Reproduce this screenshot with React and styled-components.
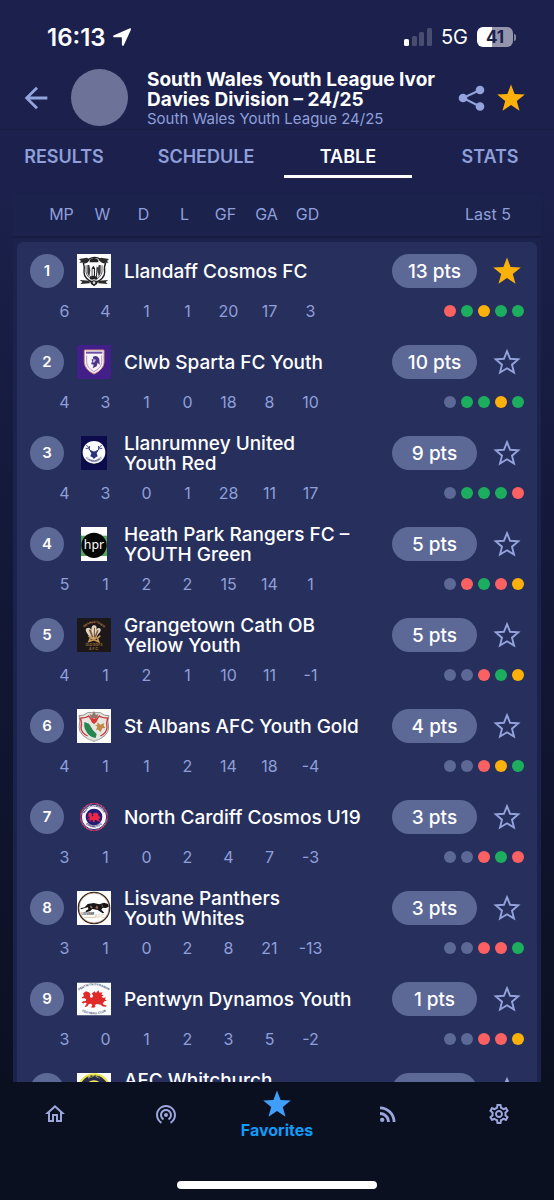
import React, { useState } from "react";
import styled, { createGlobalStyle } from "styled-components";
import {
  MdOutlineHome,
  MdWifiTethering,
  MdRssFeed,
  MdOutlineSettings,
  MdArrowBack
} from "react-icons/md";

const colors = {
  header: "#1b214c",
  card: "#27305c",
  pill: "#5c6896",
  muted: "#8f9fda",
  grey: "#5c6896",
  green: "#1cae5e",
  red: "#fb6163",
  amber: "#fbb00a",
  nav: "#0b1021",
  blue: "#129bf9"
};

const GlobalStyle = createGlobalStyle`
  * {
    box-sizing: border-box;
  }

  body {
    margin: 0;
    background: ${colors.nav};
    color: #ffffff;
    font-family: Inter, "Liberation Sans", sans-serif;
  }

  button {
    padding: 0;
    border: 0;
    background: none;
    color: inherit;
    font: inherit;
    cursor: pointer;
  }
`;

const Screen = styled.div`
  display: flex;
  flex-direction: column;
  height: 100vh;
  background: linear-gradient(#1b214c 180px, #15193c 480px, ${colors.nav} 1080px);
`;

const StatusBar = styled.div`
  display: flex;
  align-items: center;
  justify-content: space-between;
  height: 68px;
  padding: 6px 38px 0 47px;
  background: ${colors.header};
`;

const StatusGroup = styled.div`
  display: flex;
  align-items: center;
  gap: ${props => props.$gap}px;
`;

const Time = styled.span`
  font-size: 24px;
  font-weight: 600;
`;

const Network = styled.span`
  font-size: 20px;
`;

const Battery = styled.span`
  display: flex;
  align-items: center;
  gap: 1px;

  &::after {
    content: "";
    width: 2px;
    height: 7px;
    border-radius: 0 2px 2px 0;
    background: #84869f;
  }
`;

const BatteryLevel = styled.span`
  width: 36px;
  border-radius: 6px;
  background: linear-gradient(90deg, #ffffff 41%, #9495ac 41%);
  color: ${colors.header};
  font-size: 17px;
  font-weight: 700;
  line-height: 20px;
  text-align: center;
`;

const Header = styled.header`
  display: flex;
  align-items: center;
  height: 62px;
  padding: 0 26px 2px 19px;
  border-bottom: 1px solid #161b3f;
  background: ${colors.header};
`;

const IconButton = styled.button`
  display: flex;
  flex: none;
  color: ${props => props.$color || "#94a3dc"};
`;

const LeagueLogo = styled.div`
  flex: none;
  width: 57px;
  height: 57px;
  margin: 0 19px 0 18px;
  border-radius: 50%;
  background: #6d7398;
`;

const Titles = styled.div`
  flex: 1;
  min-width: 0;
  padding-top: 2px;
`;

const Title = styled.h1`
  margin: 0;
  font-size: 19px;
  font-weight: 700;
  line-height: 20px;
  white-space: pre;
`;

const Subtitle = styled.p`
  margin: 0;
  color: ${colors.muted};
  font-size: 15px;
  line-height: 18px;
`;

const HeaderActions = styled.div`
  display: flex;
  align-items: center;
  gap: 9px;
`;

const Tabs = styled.nav`
  display: flex;
  flex: none;
  gap: 14px;
  background: ${colors.header};
`;

const Tab = styled.button`
  flex: 1;
  height: 48px;
  padding-top: 8px;
  border-bottom: 3px solid ${props => (props.$active ? "#ffffff" : "transparent")};
  color: ${props => (props.$active ? "#ffffff" : colors.muted)};
  font-size: 18px;
  font-weight: 600;
`;

const Scroll = styled.main`
  flex: 1;
  min-height: 0;
  overflow-y: auto;
  padding: 16px 13px 0;
  scrollbar-width: none;
`;

const Table = styled.table`
  display: block;
  background: #1b224c;
`;

const Head = styled.thead`
  display: block;
  margin-bottom: 4px;
  border-bottom: 2px solid #161b3f;
`;

const HeadRow = styled.tr`
  display: flex;
  align-items: center;
  height: 42px;
  padding: 0 30px 2px 28px;
`;

const HeadCell = styled.th`
  flex: ${props => (props.$last ? "1" : "0 0 41px")};
  padding: 0;
  color: ${colors.muted};
  font-size: 16px;
  font-weight: 400;
  text-align: ${props => (props.$last ? "right" : "center")};
`;

const TeamGroup = styled.tbody`
  display: block;
  margin: 0 4px;
  padding-bottom: 11px;
  background: ${colors.card};

  &:first-of-type {
    border-radius: 6px 6px 0 0;
  }
`;

const TeamRow = styled.tr`
  display: flex;
  align-items: center;
  gap: 13px;
  height: 58px;
  padding: 0 13px;
`;

const Cell = styled.td`
  display: flex;
  padding: 0;
`;

const Rank = styled.span`
  width: 34px;
  border-radius: 50%;
  background: ${colors.pill};
  font-size: 15px;
  font-weight: 600;
  line-height: 34px;
  text-align: center;
`;

const TeamName = styled.th`
  flex: 1;
  min-width: 0;
  padding: 2px 0 0;
  font-size: 19px;
  font-weight: 500;
  line-height: 20px;
  text-align: left;
  white-space: pre;
`;

const Points = styled.span`
  width: 85px;
  height: 34px;
  border-radius: 17px;
  background: ${colors.pill};
  font-size: 19px;
  font-weight: 500;
  line-height: 35px;
  text-align: center;
`;

const StatsRow = styled.tr`
  display: flex;
  align-items: center;
  height: 22px;
  padding: 0 13px 0 27px;
`;

const Stat = styled.td`
  flex: 0 0 41px;
  padding: 0;
  color: ${colors.muted};
  font-size: 16px;
  text-align: center;
`;

const Form = styled.td`
  display: flex;
  flex: 1;
  justify-content: flex-end;
  gap: 5px;
  padding: 0;
`;

const Dot = styled.span`
  width: 12px;
  height: 12px;
  border-radius: 50%;
  background: ${props => props.$color};
`;

const BottomNav = styled.nav`
  flex: none;
  height: 118px;
  background: ${colors.nav};
`;

const NavItems = styled.div`
  display: flex;
  height: 99px;
`;

const NavLink = styled.a`
  display: flex;
  flex: 1;
  flex-direction: column;
  align-items: center;
  padding-top: ${props => (props.$active ? 5 : 20)}px;
  color: ${props => (props.$active ? colors.blue : "#9ba6dc")};
  font-size: 16px;
  font-weight: 700;
  line-height: 18px;
  text-decoration: none;
`;

const HomeIndicator = styled.div`
  width: 36%;
  height: 8px;
  margin: 0 auto;
  border-radius: 4px;
  background: #ffffff;
`;

const Star = ({ color = "currentColor" }) => (
  <svg width="34" height="34" viewBox="0 0 34 34" aria-hidden="true">
    <path fill={color} d="M17 3.5l3.6 9.600 10.200.4-8 6.400 2.700 9.800-8.500-5.700-8.500 5.700 2.700-9.800-8-6.400 10.200-.4z" />
  </svg>
);

const StarOutline = () => (
  <svg width="34" height="34" viewBox="0 0 34 34" aria-hidden="true">
    <path
      fill="none"
      stroke="currentColor"
      strokeWidth="1.900"
      d="M17 6.200L20.100 13.800L28.200 14.400L22 19.700L24 27.500L17 23.300L10 27.500L12 19.700L5.800 14.400L13.900 13.800z"
    />
  </svg>
);

const ShareIcon = () => (
  <svg width="28" height="28" viewBox="0 0 28 28" aria-hidden="true">
    <path fill="none" stroke="currentColor" strokeWidth="2" d="M23 6L6 14l17 8.500" />
    <circle cx="6" cy="14" r="4.300" fill="currentColor" />
    <circle cx="23" cy="6" r="4.300" fill="currentColor" />
    <circle cx="23" cy="22.500" r="4.300" fill="currentColor" />
  </svg>
);

const Crest = ({ children }) => (
  <svg width="34" height="34" viewBox="0 0 102 102" aria-hidden="true">
    {children}
  </svg>
);

const ArcText = ({ id, d, fill, size, children }) => (
  <>
    <path id={id} d={d} fill="none" />
    <text fill={fill} fontSize={size} fontWeight="700" textAnchor="middle">
      <textPath href={`#${id}`} startOffset="50%">
        {children}
      </textPath>
    </text>
  </>
);

const Dragon = ({ fill }) => (
  <path
    fill={fill}
    d="M16 32l9-7 10 3 5 7-2 9 7 3 4-8-5-6 9-8 5 6 8-9 4 8 10-2-4 8 8 2-8 6 8 3 6-3-2 8 6 4-8 2-6 8 8 5 6 1-3 4-10-1-9-6-12-2-6 4 3 6-8 2-8-1 5-5-3-7-8 1-6 8-8 2 3-6 4-6-6-3-6 3-5-2 5-5 8-1 2-6-7-4-8 2 2-5 6-3-2-4z"
  />
);

const crests = {
  llandaff: (
    <Crest>
      <path fill="#fdfdfd" d="M0 0h102v102H0z" />
      <path fill="none" stroke="#1c1c1e" strokeWidth="4" d="M19 27q14-1 17-12 17-9 34 0 3 11 16 12-6 12-3 28 0 20-31 33-31-13-31-33 3-16-2-28z" />
      <path fill="#2a2a2c" d="M6 15l24-4 8 6-9 8-22 1 5-5zM96 15l-24-4-8 6 9 8 22 1-5-5zM8 78l30 2v8L10 90l6-6zM94 78l-30 2v8l28 2-6-6z" />
      <path fill="none" stroke="#626268" strokeWidth="3" d="M27 34v20q1 14 24 26 23-12 24-26V34" />
      <path fill="#3c3c40" d="M31 33h6l3 16-3 20-6-12zM71 33h-6l-3 16 3 20 6-12z" />
      <path fill="#222225" d="M38 17l13-6 13 6v8H38zM44 43l5-8 5 8v24h7v9H39v-9h5zM59 37l4 4-3 25h-3z" />
      <path fill="#e6e6e6" d="M46 45h5v20h-5z" />
      <path fill="#222225" d="M38 80h26l-4 10-9 7-9-7z" />
      <circle cx="51" cy="86" r="4" fill="#d5d5d5" />
    </Crest>
  ),
  sparta: (
    <Crest>
      <path fill="#431f8a" d="M0 0h102v102H0z" />
      <path fill="#f8f3f6" stroke="#d38b80" strokeWidth="3" d="M22 15h59v38q-2 21-30 34-27-13-29-34z" />
      <path fill="#6b4fa6" d="M27 20h49v6H27z" />
      <path fill="none" stroke="#8a70be" strokeWidth="2" d="M29 31v21q1 16 22 28 22-12 23-28V31" />
      <path fill="#4a348f" d="M47 36q14-8 20 6l1 18-6-7-3 11-12 6 3-11-8-2 4-8-3-5 6-3z" />
      <path fill="#c4b8df" d="M49 42l8 2-4 8-6 1z" />
    </Crest>
  ),
  llanrumney: (
    <Crest>
      <path fill="#0c0b4b" d="M12 0h78v102H12z" />
      <circle cx="51" cy="49" r="34" fill="#fbfcff" />
      <path fill="none" stroke="#3e488c" strokeWidth="3" d="M48 47q-12-2-14-14l-6-6M34 37l-8 0M36 41l2-11M54 47q12-2 14-14l6-6M68 37l8 0M66 41l-2-11" />
      <path fill="#29327b" d="M37 43l11 4 3-2 3 2 11-4-6 9 3 9-6 3-5 5-5-5-6-3 3-9z" />
      <ArcText id="llanrumney-arc" d="M23 62Q51 94 79 62" fill="#29327b" size="8">LLANRUMNEY</ArcText>
    </Crest>
  ),
  heath: (
    <Crest>
      <path fill="#ffffff" d="M12 0h78v102H12z" />
      <path fill="#57a65d" d="M12 26h78v61H12z" />
      <circle cx="51" cy="55" r="38" fill="#050606" />
      <text x="51" y="66" fill="#ffffff" fontFamily="Noto Sans, sans-serif" fontSize="37" textAnchor="middle">
        hpr
      </text>
    </Crest>
  ),
  grangetown: (
    <Crest>
      <path fill="#1c1718" d="M0 0h102v102H0z" />
      <ArcText id="grangetown-arc" d="M14 38Q51-8 88 38" fill="#ad7944" size="9">GRANGETOWN</ArcText>
      <path fill="#e4d5c1" d="M31 47q-11-17 3-18 6 0 9 7 0-16 10-14 8 2 5 14 4-9 11-5 7 6-6 18l-8 15H44z" />
      <path fill="#7e5c43" d="M35 35l10 24 4-2-7-22zM51 29h3v29h-4zM65 37l-9 24-4-3 8-21z" />
      <path fill="none" stroke="#c39454" strokeWidth="5" d="M34 54l10 6h18l8-7M40 60l-4 10 15-5 14 6-4-12" />
      <text x="51" y="84" fill="#9b6c35" fontSize="10" fontWeight="700" textAnchor="middle">OLD BOYS</text>
      <text x="51" y="96" fill="#9b6c35" fontSize="10" fontWeight="700" textAnchor="middle">A.F.C.</text>
    </Crest>
  ),
  albans: (
    <Crest>
      <path fill="#fbfbf9" d="M0 0h102v102H0z" />
      <path fill="#e6e5e0" stroke="#96928d" strokeWidth="3" d="M6 20q16 1 26-9h38q10 10 26 9-6 16-1 34 0 29-44 43Q7 83 6 54q5-18 0-34z" />
      <path fill="none" stroke="#c83940" strokeWidth="4" d="M10 27q17 0 25-6l16 21 16-21q8 6 25 6-5 16-2 29-1 16-20 25M10 27q6 16 2 29 1 16 20 25" />
      <path fill="#94766b" d="M38 15l7 3 6-12 6 12 7-3-3 12H41z" />
      <path fill="#d93834" d="M51 45q-13-10-9-16 5-5 9 1 6-6 10 0 3 6-10 15z" />
      <path fill="#27864f" d="M22 39q-2 18 5 27 9 18 29 21l3-12-11-11-12-20z" />
      <path fill="#be8b47" d="M61 40l9 7 12-5-2 8 5 7-9 1-5 11-8-7-6 2 4-11-7-4 7-1z" />
      <path fill="#c6c3bd" d="M32 88q19 10 38 0l-4 5q-15 6-30 0z" />
    </Crest>
  ),
  cardiff: (
    <Crest>
      <circle cx="51" cy="51" r="41" fill="#faf7fb" stroke="#c51849" strokeWidth="3" />
      <circle cx="51" cy="51" r="38" fill="none" stroke="#31236f" strokeWidth="3" />
      <circle cx="51" cy="51" r="25" fill="#211d77" />
      <ArcText id="cardiff-top" d="M22 49A29 29 0 0 1 80 49" fill="#26215c" size="9">NORTH CARDIFF</ArcText>
      <ArcText id="cardiff-bottom" d="M17 56A35 35 0 0 0 85 56" fill="#26215c" size="9">COSMOS FC</ArcText>
      <g transform="translate(26 24) scale(.48 .54)">
        <Dragon fill="#ef2646" />
      </g>
    </Crest>
  ),
  lisvane: (
    <Crest>
      <path fill="#ffffff" d="M0 0h102v102H0z" />
      <circle cx="51" cy="51" r="47" fill="#ffffff" stroke="#33251f" strokeWidth="4" />
      <circle cx="51" cy="51" r="45" fill="none" stroke="#a47b5b" strokeWidth="2" />
      <path fill="#171617" d="M9 52l14-3 9-10 18-3 17 4 14-5 12 4 2 8-8 4-10-1-4 6 9 9-5 2-15-10-16-3-6 6-12 4-3-4 9-5-1-6-12 3-7 3z" />
      <path fill="#8d6651" d="M40 43l7 5-2 5-6-4zM59 43l5 6-2 6-7-4zM73 40l6 5-4 3z" />
      <text x="33" y="73" fill="#303038" fontSize="9" fontWeight="700" textAnchor="middle">LISVANE</text>
      <text x="68" y="80" fill="#d8c59f" fontSize="16" textAnchor="middle">AFC</text>
      <path stroke="#dac9a8" strokeWidth="3" d="M22 79h34" />
    </Crest>
  ),
  pentwyn: (
    <Crest>
      <path fill="#fcfdff" d="M0 2h102v98H0z" />
      <ArcText id="pentwyn-top" d="M5 27Q51-7 97 27" fill="#536388" size="9">PENTWYN DYNAMOS</ArcText>
      <g transform="translate(4 5) scale(.91)">
        <Dragon fill="#df2a29" />
      </g>
      <ArcText id="pentwyn-bottom" d="M10 86Q51 108 92 86" fill="#4b5a80" size="9">FOOTBALL CLUB</ArcText>
    </Crest>
  ),
  whitchurch: (
    <Crest>
      <path fill="#ffffff" d="M0 0h102v102H0z" />
      <circle cx="51" cy="51" r="47" fill="#26294d" stroke="#e9e23c" strokeWidth="6" />
      <circle cx="51" cy="51" r="29" fill="#f0e95a" />
      <ArcText id="whitchurch-arc" d="M18 45A33 33 0 0 1 84 45" fill="#f0e95a" size="12">A.F.C.</ArcText>
    </Crest>
  )
};

const columns = ["MP", "W", "D", "L", "GF", "GA", "GD"];

const teams = [
  { crest: "llandaff", name: "Llandaff Cosmos FC", pts: 13, stats: [6, 4, 1, 1, 20, 17, 3], form: "LWDWW", favorite: true },
  { crest: "sparta", name: "Clwb Sparta FC Youth", pts: 10, stats: [4, 3, 1, 0, 18, 8, 10], form: "-WWDW" },
  { crest: "llanrumney", name: "Llanrumney United\nYouth Red", pts: 9, stats: [4, 3, 0, 1, 28, 11, 17], form: "-WWWL" },
  { crest: "heath", name: "Heath Park Rangers FC –\nYOUTH Green", pts: 5, stats: [5, 1, 2, 2, 15, 14, 1], form: "-LWLD" },
  { crest: "grangetown", name: "Grangetown Cath OB\nYellow Youth", pts: 5, stats: [4, 1, 2, 1, 10, 11, -1], form: "--LWD" },
  { crest: "albans", name: "St Albans AFC Youth Gold", pts: 4, stats: [4, 1, 1, 2, 14, 18, -4], form: "--LDW" },
  { crest: "cardiff", name: "North Cardiff Cosmos U19", pts: 3, stats: [3, 1, 0, 2, 4, 7, -3], form: "--LWL" },
  { crest: "lisvane", name: "Lisvane Panthers\nYouth Whites", pts: 3, stats: [3, 1, 0, 2, 8, 21, -13], form: "--LLW" },
  { crest: "pentwyn", name: "Pentwyn Dynamos Youth", pts: 1, stats: [3, 0, 1, 2, 3, 5, -2], form: "--LLD" },
  { crest: "whitchurch", name: "AFC Whitchurch\n\u00a0", stats: [], form: "" }
];

const formColors = {
  W: colors.green,
  D: colors.amber,
  L: colors.red,
  "-": colors.grey
};

const Team = ({ team, rank }) => {
  const [favorite, setFavorite] = useState(!!team.favorite);
  return (
    <TeamGroup>
      <TeamRow>
        <Cell>
          <Rank>{rank}</Rank>
        </Cell>
        <Cell>{crests[team.crest]}</Cell>
        <TeamName scope="rowgroup">{team.name}</TeamName>
        <Cell>
          <Points>{team.pts === undefined ? "\u00a0" : `${team.pts} pts`}</Points>
        </Cell>
        <Cell>
          <IconButton
            $color={favorite ? colors.amber : undefined}
            aria-label="Favorite"
            aria-pressed={favorite}
            onClick={() => setFavorite(!favorite)}
          >
            {favorite ? <Star /> : <StarOutline />}
          </IconButton>
        </Cell>
      </TeamRow>
      <StatsRow>
        {team.stats.map((value, i) => (
          <Stat key={columns[i]}>{value}</Stat>
        ))}
        <Form>
          {team.form.split("").map((result, i) => (
            <Dot key={i} $color={formColors[result]} />
          ))}
        </Form>
      </StatsRow>
    </TeamGroup>
  );
};

const App = () => {
  const [tab, setTab] = useState("TABLE");
  return (
    <>
      <GlobalStyle />
      <Screen>
        <StatusBar>
          <StatusGroup $gap={6}>
            <Time>16:13</Time>
            <svg width="20" height="20" viewBox="0 0 20 20" aria-hidden="true">
              <path fill="#ffffff" d="M18 1.2a1 1 0 0 1 1 1.2l-7.3 16a1 1 0 0 1-1.8-.4V11a.8.8 0 0 0-.8-.8H2a1 1 0 0 1-.5-1.8z" />
            </svg>
          </StatusGroup>
          <StatusGroup $gap={9}>
            <svg width="28" height="18" viewBox="0 0 28 18" aria-hidden="true">
              <rect y="11" width="5" height="7" rx="1.5" fill="#ffffff" />
              <rect x="8" y="8" width="5" height="10" rx="1.5" fill="#494d70" />
              <rect x="15" y="4" width="5" height="14" rx="1.5" fill="#494d70" />
              <rect x="23" width="5" height="18" rx="1.5" fill="#494d70" />
            </svg>
            <Network>5G</Network>
            <Battery>
              <BatteryLevel>41</BatteryLevel>
            </Battery>
          </StatusGroup>
        </StatusBar>

        <Header>
          <IconButton aria-label="Back">
            <MdArrowBack size={34} />
          </IconButton>
          <LeagueLogo />
          <Titles>
            <Title>{"South Wales Youth League Ivor\nDavies Division – 24/25"}</Title>
            <Subtitle>South Wales Youth League 24/25</Subtitle>
          </Titles>
          <HeaderActions>
            <IconButton aria-label="Share">
              <ShareIcon />
            </IconButton>
            <IconButton aria-label="Favorite" $color={colors.amber}>
              <Star />
            </IconButton>
          </HeaderActions>
        </Header>

        <Tabs>
          {["RESULTS", "SCHEDULE", "TABLE", "STATS"].map(name => (
            <Tab key={name} $active={tab === name} onClick={() => setTab(name)}>
              {name}
            </Tab>
          ))}
        </Tabs>

        <Scroll>
          <Table>
            <Head>
              <HeadRow>
                {columns.map(name => (
                  <HeadCell key={name} scope="col">
                    {name}
                  </HeadCell>
                ))}
                <HeadCell scope="col" $last>
                  Last 5
                </HeadCell>
              </HeadRow>
            </Head>
            {teams.map((team, i) => (
              <Team key={team.crest} team={team} rank={i + 1} />
            ))}
          </Table>
        </Scroll>

        <BottomNav>
          <NavItems>
            <NavLink href="#home" aria-label="Home">
              <MdOutlineHome size={24} />
            </NavLink>
            <NavLink href="#live" aria-label="Live">
              <MdWifiTethering size={24} />
            </NavLink>
            <NavLink href="#favorites" $active>
              <Star color="#409ffc" />
              Favorites
            </NavLink>
            <NavLink href="#news" aria-label="News">
              <MdRssFeed size={24} />
            </NavLink>
            <NavLink href="#settings" aria-label="Settings">
              <MdOutlineSettings size={24} />
            </NavLink>
          </NavItems>
          <HomeIndicator />
        </BottomNav>
      </Screen>
    </>
  );
};

export default App;
